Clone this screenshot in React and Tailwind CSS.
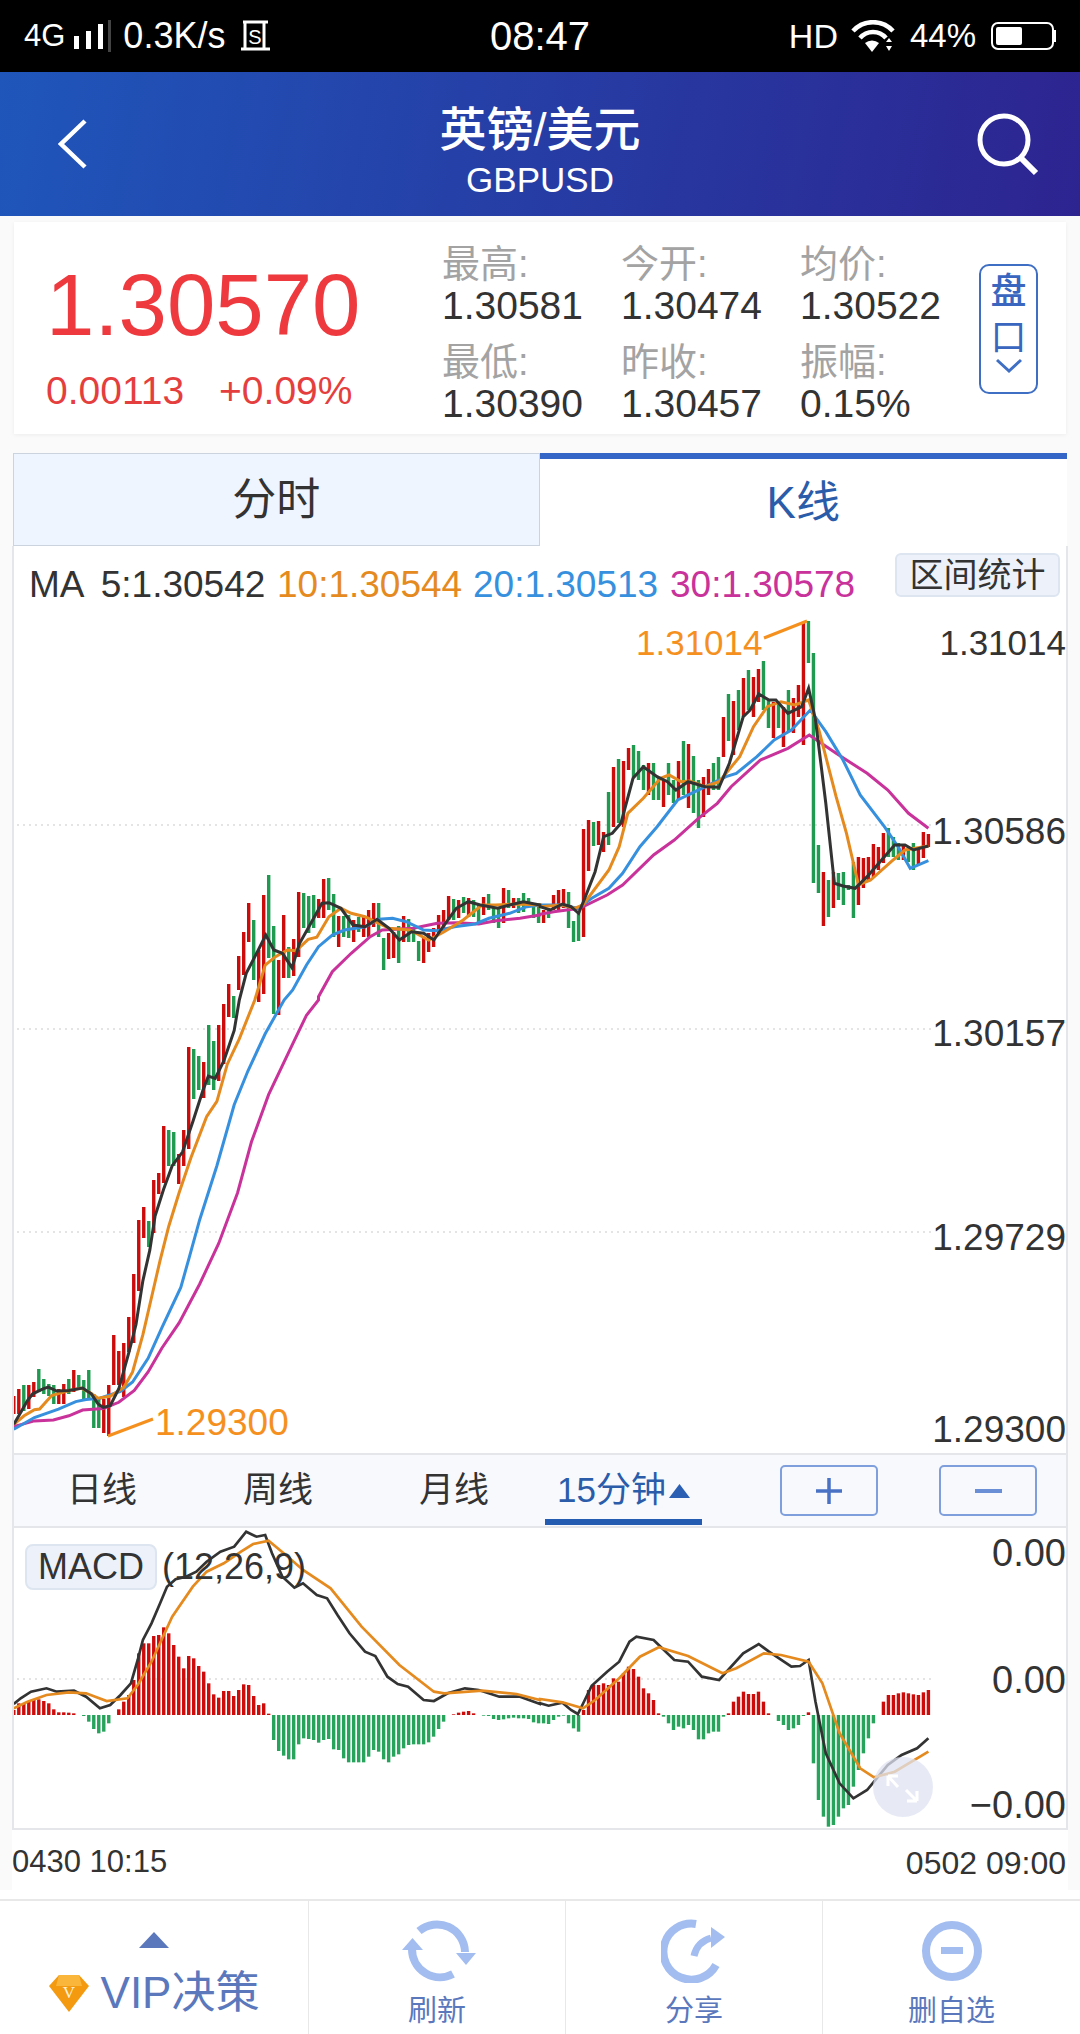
import React from 'react';

const FONT = { fontFamily: '"Liberation Sans","Noto Sans CJK SC",sans-serif' };
const RED = '#cc0b0b';
const GREEN = '#1f9a50';

// candles as [up, top, bottom], one every 5px
const CANDLES = [
  [1,1396,1414],[1,1389,1414],[0,1385,1411],[1,1385,1409],[1,1382,1397],[0,1369,1392],[0,1379,1394],[0,1384,1396],[0,1385,1404],[1,1389,1404],
  [1,1384,1404],[0,1379,1394],[1,1370,1392],[0,1375,1390],[0,1380,1399],[0,1370,1399],[0,1394,1428],[0,1397,1428],[1,1399,1433],[1,1385,1436],
  [1,1335,1385],[1,1351,1385],[1,1343,1397],[1,1317,1352],[1,1274,1343],[1,1220,1291],[1,1207,1238],[0,1221,1247],[1,1180,1233],[1,1173,1194],
  [1,1126,1183],[0,1130,1166],[0,1132,1166],[1,1154,1184],[1,1130,1166],[1,1047,1149],[0,1049,1099],[0,1056,1090],[1,1062,1098],[0,1025,1085],
  [0,1041,1090],[1,1025,1081],[1,1004,1064],[1,984,1017],[0,996,1018],[1,956,990],[1,932,975],[1,903,942],[0,920,980],[1,950,1002],
  [1,895,994],[0,875,958],[0,926,1014],[1,960,1015],[1,915,978],[0,947,978],[1,939,976],[1,892,957],[0,893,928],[0,896,933],
  [0,895,928],[1,899,918],[1,879,918],[0,878,910],[0,894,937],[1,916,947],[0,916,937],[0,915,938],[1,920,942],[0,917,932],
  [1,916,937],[1,910,937],[1,903,927],[0,903,937],[0,938,970],[1,933,959],[1,932,958],[0,926,963],[1,916,942],[0,919,942],
  [0,928,942],[0,941,961],[1,938,963],[1,933,952],[1,928,947],[1,915,933],[1,910,928],[1,896,920],[0,899,920],[1,900,918],
  [0,897,913],[1,898,917],[0,900,917],[0,904,922],[1,897,915],[0,894,910],[0,907,923],[0,907,928],[1,888,923],[0,890,908],
  [1,898,908],[0,898,913],[0,893,912],[0,898,907],[0,905,918],[0,903,923],
  [1,910,923],[0,908,918],[1,895,910],[1,890,910],[1,889,908],[0,892,928],[0,921,942],[0,912,941],[1,829,937],[1,820,871],
  [0,822,846],[1,821,845],[1,832,852],[0,792,845],[1,767,827],[0,759,823],[1,761,827],[1,748,770],[0,745,777],[0,751,780],
  [0,765,790],[1,763,795],[0,763,800],[0,777,800],[1,780,807],[0,763,795],[0,780,803],[1,761,800],[0,741,795],[1,744,808],
  [0,756,813],[0,780,828],[1,777,817],[1,769,795],[0,763,790],[0,757,790],[1,717,757],[0,694,741],[1,701,755],[0,690,730],
  [1,678,717],[0,670,710],[1,677,717],[1,669,702],[0,661,710],[0,700,728],[1,702,738],[0,703,728],[1,707,747],[0,690,732],
  [1,698,733],[1,685,717],[1,623,745],[0,621,663],[0,653,883],[0,845,893],[1,872,926],[0,880,917],[1,872,908],[0,873,900],
  [0,872,905],[0,885,890],[0,862,918],[1,857,905],[1,858,888],[1,857,882],[1,844,877],[1,847,870],[1,833,863],[0,828,857],
  [0,837,857],[0,843,860],[1,845,860],[0,847,862],[0,843,870],[1,848,865],[1,832,858],[1,834,847],
];

// macd bars, height above (+) or below (-) the zero line, in 1/3 px
const HIST = [
  15,35,35,40,45,47,42,35,17,8,8,7,5,0,-3,-20,-42,-55,-50,-25,0,17,40,60,105,185,215,215,237,240,263,245,210,175,140,177,170,147,130,95,
  62,52,72,72,57,75,92,90,57,30,35,4,-75,-108,-122,-133,-133,-88,-70,-72,-75,-83,-75,-72,-103,-105,-130,-142,-142,-142,-142,-125,-105,-110,-133,-142,-125,-118,-100,-90,
  -88,-88,-88,-82,-65,-42,-20,0,2,7,10,12,5,0,-2,-3,-12,-15,-13,-10,-8,-10,-10,-12,-22,-25,
  -25,-27,-15,-5,-2,-25,-40,-50,15,75,90,90,95,90,110,100,125,145,138,115,80,65,45,5,-5,-25,-45,-35,-40,-30,-45,-73,-73,-55,-50,-50,-5,5,
  40,55,70,63,63,70,40,5,0,-18,-30,-45,-40,-30,-3,8,-145,-255,-305,-335,-330,-305,-280,-270,-215,-165,-115,-70,-25,0,40,60,60,65,68,65,62,60,68,75,
];

const conv = (pairs, ox, oy, sy) => {
  const out = [];
  for (let i = 0; i < pairs.length; i += 2) {
    out.push(`${(ox + pairs[i] / 2.904).toFixed(1)},${(oy + pairs[i + 1] / sy).toFixed(1)}`);
  }
  return out.join(' ');
};

// traced per zoomed region: bottom left, top left, top right
const mainLine = (a, b, c) => `${conv(a, 0, 1000, 2.958)} ${conv(b, 0, 600, 3)} ${conv(c, 540, 600, 3)}`;

const MA5 = mainLine(
  [40,1255,60,1220,80,1185,95,1165,125,1150,140,1145,165,1157,200,1155,240,1148,265,1165,285,1195,300,1205,320,1200,345,1150,375,1040,395,960,415,830,435,740,450,640,475,560,500,490,530,450,560,360,590,265,605,225,625,232,650,180,680,90,695,0],
  [695,1200,715,1120,750,1050,772,1005,795,1050,820,1060,848,1103,870,1030,900,975,935,910,955,908,990,925,1025,975,1060,980,1095,958,1130,985,1160,1020,1195,995,1230,1000,1260,1020,1290,975,1325,925,1360,905,1395,915,1445,925,1480,915,1520,905,1568,915],
  [0,920,30,930,65,912,90,920,112,940,130,895,160,815,185,710,210,700,235,670,270,535,300,500,340,530,370,545,395,570,430,545,480,560,520,562,550,490,590,350,610,330,635,282,665,300,685,300,720,340,760,320,780,265,800,360,830,610,855,850,880,858,915,865,950,830,1000,770,1030,735,1060,735,1085,750,1128,738],
);
const MA10 = mainLine(
  [40,1255,70,1230,100,1212,115,1210,150,1170,190,1158,235,1148,260,1160,285,1178,320,1172,360,1145,385,1100,415,990,440,880,465,770,490,670,520,570,555,465,600,345,630,300,660,190,695,115,740,0],
  [740,1200,770,1095,800,1070,835,1050,860,1052,895,1018,920,1012,955,950,990,925,1020,940,1060,950,1100,970,1130,985,1190,990,1245,1020,1290,995,1345,960,1400,915,1440,915,1500,912,1568,915],
  [0,920,65,915,100,925,125,915,200,810,230,740,255,640,300,595,350,535,375,525,410,545,435,543,480,560,520,545,580,470,620,380,660,320,700,305,740,315,780,300,810,390,860,590,890,700,925,855,960,840,1020,785,1060,750,1128,738],
);
const MA20 = mainLine(
  [40,1270,100,1235,170,1210,220,1188,250,1182,290,1178,350,1158,385,1130,430,1060,470,970,525,850,550,760,580,650,630,490,680,310,720,210,770,100,825,0],
  [825,1200,850,1170,890,1095,925,1040,965,1005,1000,990,1060,980,1100,958,1140,955,1180,965,1230,990,1270,992,1320,980,1380,972,1420,955,1480,940,1530,920,1568,915],
  [0,915,60,915,110,925,150,895,200,865,240,820,290,740,340,680,400,600,470,565,540,530,570,520,630,470,680,420,730,390,785,330,830,395,880,480,930,585,1000,680,1040,740,1075,805,1128,782],
);
const MA30 = mainLine(
  [40,1262,100,1245,155,1242,200,1230,240,1213,300,1208,345,1190,390,1155,430,1100,470,1030,520,955,580,840,635,720,690,570,730,420,780,280,850,130,890,45,925,0],
  [925,1190,965,1115,1020,1060,1075,1010,1110,990,1200,985,1270,970,1330,968,1390,972,1440,962,1510,955,1568,945],
  [0,943,40,935,115,925,195,885,240,855,330,765,390,720,460,655,515,610,555,560,640,480,720,445,782,405,860,460,950,520,1010,570,1070,640,1128,685],
);

const macdLine = (a, b) => `${conv(a, 0, 1520, 3)} ${conv(b, 540, 1520, 3)}`;
const DIF = macdLine(
  [40,552,60,535,90,515,135,505,165,515,215,512,250,530,290,565,320,555,350,525,380,490,400,420,415,360,440,310,465,250,485,200,510,178,540,170,570,155,600,125,640,95,680,80,715,35,745,50,770,45,790,100,820,170,855,203,880,190,920,225,950,235,980,285,1015,340,1060,395,1090,408,1125,470,1155,492,1185,500,1230,540,1260,543,1300,520,1350,505,1390,510,1450,530,1510,530,1568,552],
  [0,550,25,557,65,548,90,570,110,582,130,540,150,497,195,455,230,425,260,365,280,350,330,360,390,420,430,425,470,470,520,480,590,400,635,372,665,395,730,440,755,438,780,420,800,545,830,700,870,790,910,835,950,810,1010,735,1050,705,1095,685,1128,655],
);
const DEA = macdLine(
  [40,565,80,545,135,525,200,517,250,520,310,543,370,535,400,495,440,425,500,290,560,200,600,155,650,130,700,95,735,72,780,62,830,105,880,150,960,205,1050,320,1160,435,1260,515,1290,520,1400,512,1500,522,1568,540],
  [0,537,65,547,125,565,160,540,230,475,290,410,345,382,430,408,530,460,570,445,650,400,700,405,780,425,820,490,870,640,930,745,970,772,1030,755,1128,695],
);

const barX = (i) => 13.8 + i * (914.6 / 183);

function KLineChart() {
  return (
    <svg viewBox="14 546 1052 907" className="absolute left-0 top-0 w-[1052px] h-[907px]">
      {[825, 1029, 1232].map((y) => (
        <line key={y} x1="17" x2="932" y1={y} y2={y} stroke="#e4e4e4" strokeWidth="2" strokeDasharray="2 4" />
      ))}
      {CANDLES.map(([up, top, bottom], i) => (
        <rect key={i} x={barX(i) - 1.7} y={top} width="3.4" height={bottom - top} fill={up ? RED : GREEN} />
      ))}
      <polyline points={MA30} fill="none" stroke="#c9329a" strokeWidth="3" />
      <polyline points={MA20} fill="none" stroke="#3690de" strokeWidth="3" />
      <polyline points={MA10} fill="none" stroke="#e58a1f" strokeWidth="3" />
      <polyline points={MA5} fill="none" stroke="#333" strokeWidth="3" />
      <polyline points="764,638 807,621" fill="none" stroke="#f5901e" strokeWidth="3" />
      <polyline points="108,1436 153,1419" fill="none" stroke="#f5901e" strokeWidth="3" />
    </svg>
  );
}

function MacdChart() {
  return (
    <svg viewBox="14 1528 1052 300" className="absolute left-0 top-0 w-[1052px] h-[300px]">
      <line x1="17" x2="932" y1="1679" y2="1679" stroke="#e4e4e4" strokeWidth="2" strokeDasharray="2 4" />
      {HIST.map((v, i) => (
        <rect
          key={i}
          x={barX(i) - 1.7}
          y={v > 0 ? 1715 - v / 3 : 1715}
          width="3.4"
          height={Math.abs(v) / 3}
          fill={v > 0 ? RED : '#27a35c'}
        />
      ))}
      <polyline points={DIF} fill="none" stroke="#333" strokeWidth="2.7" />
      <polyline points={DEA} fill="none" stroke="#e58a1f" strokeWidth="2.7" />
      <circle cx="903" cy="1787" r="30" fill="#dfe3f2" fillOpacity="0.75" />
      <path d="M898 1787L888 1776M888 1776v10M888 1776h10M906 1790L917 1801M917 1801v-10M917 1801h-10" fill="none" stroke="#fff" strokeWidth="3" />
    </svg>
  );
}

function Stat({ label, value }) {
  return (
    <div className="flex flex-col h-[98px]">
      <span className="text-[38px] leading-[40px] text-[#a3a3a3]">{label}</span>
      <span className="text-[39px] leading-[44px] text-[#333]">{value}</span>
    </div>
  );
}

function PriceLabel({ className, children }) {
  return <div className={`absolute right-0 leading-[40px] text-[#333] ${className}`}>{children}</div>;
}

function StatusBar() {
  return (
    <div className="h-[72px] bg-black text-white grid grid-cols-3 items-center text-[31px] px-[24px]">
      <div className="flex items-center">
        <span>4G</span>
        <div className="flex items-end gap-[7px] h-[25px] ml-[9px]">
          <div className="w-[5px] h-[13px] bg-white" />
          <div className="w-[5px] h-[18px] bg-white" />
          <div className="w-[5px] h-[25px] bg-white" />
        </div>
        <div className="w-[3px] h-[32px] bg-[#444] ml-[5px] mr-[12px]" />
        <span className="text-[36px]">0.3K/s</span>
        <svg viewBox="0 0 30 32" className="w-[30px] h-[32px] ml-[15px]">
          <path d="M3 2h25M5 2v26M24 2v26M1 29h29" stroke="#fff" strokeWidth="3" fill="none" />
          <text x="15" y="24" fontSize="20" fill="#fff" textAnchor="middle" fontFamily="Liberation Sans">S</text>
        </svg>
      </div>
      <div className="text-center text-[40px]">08:47</div>
      <div className="flex items-center justify-end">
        <span className="text-[34px] mr-[12px]">HD</span>
        <svg viewBox="0 0 46 32" className="w-[46px] h-[32px] mr-[14px]">
          <path d="M3 11a27 27 0 0 1 40 0M10 18a17 17 0 0 1 26 0" stroke="#fff" strokeWidth="4.5" fill="none" />
          <path d="M15 23a11 11 0 0 1 14 0l-7 9z" fill="#fff" />
          <path d="M36 22l3-4 3 4zM36 26h6l-3 5z" fill="#fff" />
        </svg>
        <span className="text-[33px] mr-[15px]">44%</span>
        <div className="flex items-center">
          <div className="w-[63px] h-[28px] rounded-[7px] border-2 border-white p-[3px]">
            <div className="w-[26px] h-full bg-white rounded-[2px]" />
          </div>
          <div className="w-[2px] h-[12px] bg-white" />
        </div>
      </div>
    </div>
  );
}

function Header() {
  return (
    <div className="h-[144px] grid grid-cols-[1fr_auto_1fr] items-center text-white bg-[linear-gradient(100deg,#1f56ba,#2d2490)]">
      <svg viewBox="0 0 30 50" className="w-[30px] h-[50px] ml-[58px]">
        <path d="M27 2L3 25l24 23" fill="none" stroke="#fff" strokeWidth="4.5" />
      </svg>
      <div className="flex flex-col items-center pt-[14px]">
        <span className="text-[47px] leading-[54px] font-medium">英镑/美元</span>
        <span className="text-[35px] leading-[38px] mt-[4px]">GBPUSD</span>
      </div>
      <svg viewBox="0 0 64 64" className="w-[64px] h-[64px] justify-self-end mr-[40px]">
        <circle cx="28" cy="28" r="24" fill="none" stroke="#fff" strokeWidth="5" />
        <path d="M45 46l15 15" stroke="#fff" strokeWidth="6" />
      </svg>
    </div>
  );
}

function QuoteCard() {
  return (
    <div className="h-[212px] mx-[14px] bg-white shadow-[0_1px_4px_rgba(0,0,0,0.06)] flex">
      <div className="w-[428px] pl-[32px] pt-[33px]">
        <div className="text-[87px] leading-[100px] text-[#ee3a3e]">1.30570</div>
        <div className="flex gap-[35px] text-[39px] leading-[42px] text-[#e53e3e] mt-[15px]">
          <span>0.00113</span>
          <span>+0.09%</span>
        </div>
      </div>
      <div className="grid grid-cols-[179px_179px_158px] content-start pt-[22px]">
        <Stat label="最高:" value="1.30581" />
        <Stat label="今开:" value="1.30474" />
        <Stat label="均价:" value="1.30522" />
        <Stat label="最低:" value="1.30390" />
        <Stat label="昨收:" value="1.30457" />
        <Stat label="振幅:" value="0.15%" />
      </div>
      <div className="w-[59px] h-[130px] mt-[42px] ml-[21px] border-2 border-[#3f6fc4] rounded-[10px] flex flex-col items-center text-[#3a66c0] text-[36px] leading-[46px] pt-[3px]">
        <span className="font-medium">盘</span>
        <span>口</span>
        <svg viewBox="0 0 28 16" className="w-[28px] h-[16px] mt-[-3px]">
          <path d="M2 2l12 11L26 2" fill="none" stroke="#3f6fc4" strokeWidth="3" />
        </svg>
      </div>
    </div>
  );
}

function Tabs() {
  return (
    <div className="h-[93px] mt-[19px] mx-[13px] flex">
      <div className="w-[527px] bg-[#eff5fe] border border-[#cbd3de] flex items-center justify-center text-[44px] text-[#333]">分时</div>
      <div className="w-[528px] bg-white border-t-[6px] border-[#3366c7] flex items-center justify-center text-[44px] text-[#2a5caa]">K线</div>
    </div>
  );
}

function TimeBar() {
  return (
    <div className="h-[75px] bg-[#f7f9fd] border-y-2 border-[#e5e6ea] flex items-center text-[35px] text-[#333]">
      <span className="w-[176px] text-center">日线</span>
      <span className="w-[176px] text-center">周线</span>
      <span className="w-[176px] text-center">月线</span>
      <div className="relative ml-[3px] w-[157px] h-full flex items-center justify-center gap-[3px] text-[#2a5caa]">
        <span>15分钟</span>
        <svg viewBox="0 0 21 14" className="w-[21px] h-[14px]">
          <path d="M10.5 0L21 14H0z" fill="#2a5fb4" />
        </svg>
        <div className="absolute left-0 right-0 bottom-[1px] h-[6px] bg-[#235cb0]" />
      </div>
      <button className="w-[98px] h-[51px] ml-[78px] border-2 border-[#7f9fdc] rounded-[5px] flex items-center justify-center">
        <svg viewBox="0 0 28 28" className="w-[28px] h-[28px]">
          <path d="M14 1v26M1 14h26" stroke="#4a72c4" strokeWidth="3.5" />
        </svg>
      </button>
      <button className="w-[98px] h-[51px] ml-[61px] border-2 border-[#7f9fdc] rounded-[5px] flex items-center justify-center">
        <div className="w-[27px] h-[4px] bg-[#6b8fd6]" />
      </button>
    </div>
  );
}

function FooterAction({ width, label, children }) {
  return (
    <div className={`${width} border-l border-[#e8e8e8] flex flex-col items-center`}>
      <div className="h-[66px] mt-[17px] flex items-center">{children}</div>
      <span className="text-[29px] leading-[34px] text-[#5b78bd] mt-[10px]">{label}</span>
    </div>
  );
}

function Footer() {
  return (
    <div className="h-[135px] mt-[9px] border-t-2 border-[#e8e8e8] flex">
      <div className="w-[308px] flex flex-col items-center">
        <svg viewBox="0 0 30 16" className="w-[30px] h-[16px] mt-[31px]">
          <path d="M15 0l15 16H0z" fill="#5b78bd" />
        </svg>
        <div className="flex items-center mt-[22px]">
          <svg viewBox="0 0 40 37" className="w-[40px] h-[37px]">
            <polygon points="10,0 30,0 40,11 20,37 0,11" fill="#f39a10" />
            <polygon points="10,0 30,0 33,11 7,11" fill="#f9b63a" />
            <text x="20" y="23" fontSize="17" fill="#fff3d0" fontFamily="Liberation Serif" textAnchor="middle">V</text>
          </svg>
          <span className="text-[44px] leading-[46px] text-[#5b78bd] ml-[12px]">VIP决策</span>
        </div>
      </div>
      <FooterAction width="w-[257px]" label="刷新">
        <svg viewBox="0 0 80 64" className="w-[80px] h-[64px]">
          <path d="M22 12A28 28 0 0 1 68 33M56 55A28 28 0 0 1 15 30" fill="none" stroke="#a3bdf0" strokeWidth="8" />
          <path d="M15.500 19L5 31h21zM59 34h20L69 46z" fill="#a3bdf0" />
        </svg>
      </FooterAction>
      <FooterAction width="w-[257px]" label="分享">
        <svg viewBox="0 0 66 64" className="w-[66px] h-[64px]">
          <path d="M35 5A28 28 0 1 0 55 46" fill="none" stroke="#a3bdf0" strokeWidth="8" />
          <path d="M33 37Q36 23 50 19" fill="none" stroke="#a3bdf0" strokeWidth="7" />
          <path d="M50 8l14 10-14 11z" fill="#a3bdf0" />
        </svg>
      </FooterAction>
      <FooterAction width="w-[258px]" label="删自选">
        <svg viewBox="0 0 64 64" className="w-[64px] h-[64px]">
          <circle cx="32" cy="32" r="26" fill="none" stroke="#a3bdf0" strokeWidth="8" />
          <rect x="21" y="28" width="22" height="7" fill="#a3bdf0" />
        </svg>
      </FooterAction>
    </div>
  );
}

export default function App() {
  return (
    <div className="w-[1080px] h-[2034px] bg-white overflow-hidden" style={FONT}>
      <StatusBar />
      <Header />
      <div className="h-[1674px] pt-[6px] bg-[#fafafb]">
        <QuoteCard />
        <Tabs />
        <div className="mx-[12px] border-x-2 border-[#e5e6ea] bg-white">
          <div className="relative h-[907px]">
            <KLineChart />
            <div className="relative flex items-start justify-between pl-[15px] pr-[6px] pt-[7px]">
              <div className="flex text-[37px] leading-[44px] mt-[10px]">
                <span className="w-[248px] text-[#333] [word-spacing:8px]">MA 5:1.30542</span>
                <span className="w-[196px] text-[#e58a1f]">10:1.30544</span>
                <span className="w-[197px] text-[#3690de]">20:1.30513</span>
                <span className="text-[#c9329a]">30:1.30578</span>
              </div>
              <div className="w-[165px] h-[44px] rounded-[6px] bg-[#edf2fa] border-2 border-[#dde5f0] flex items-center justify-center text-[34px] text-[#333]">区间统计</div>
            </div>
            <div className="absolute left-[622px] top-[77px] text-[35px] leading-[40px] text-[#f5901e]">1.31014</div>
            <div className="absolute left-[141px] top-[857px] text-[37px] leading-[40px] text-[#f5901e]">1.29300</div>
            <PriceLabel className="top-[77px] text-[35px]">1.31014</PriceLabel>
            <PriceLabel className="top-[266px] text-[37px]">1.30586</PriceLabel>
            <PriceLabel className="top-[468px] text-[37px]">1.30157</PriceLabel>
            <PriceLabel className="top-[672px] text-[37px]">1.29729</PriceLabel>
            <PriceLabel className="top-[864px] text-[37px]">1.29300</PriceLabel>
          </div>
          <TimeBar />
          <div className="relative h-[302px] border-b-2 border-[#e5e6ea]">
            <MacdChart />
            <div className="relative flex items-center pl-[11px] pt-[12px]">
              <div className="w-[132px] h-[46px] rounded-[8px] bg-[#edf2fa] border-2 border-[#dde5f0] flex items-center justify-center text-[36px] text-[#333]">MACD</div>
              <span className="text-[36px] text-[#333] ml-[5px]">(12,26,9)</span>
            </div>
            <PriceLabel className="top-[5px] text-[38px]">0.00</PriceLabel>
            <PriceLabel className="top-[132px] text-[38px]">0.00</PriceLabel>
            <PriceLabel className="top-[257px] text-[38px]">−0.00</PriceLabel>
          </div>
        </div>
        <div className="h-[60px] mx-[12px] pt-[5px] bg-white flex items-center justify-between text-[31px] text-[#333]">
          <span>0430 10:15</span>
          <span className="mr-[2px] text-[32px]">0502 09:00</span>
        </div>
      </div>
      <div className="bg-white">
        <Footer />
      </div>
    </div>
  );
}
